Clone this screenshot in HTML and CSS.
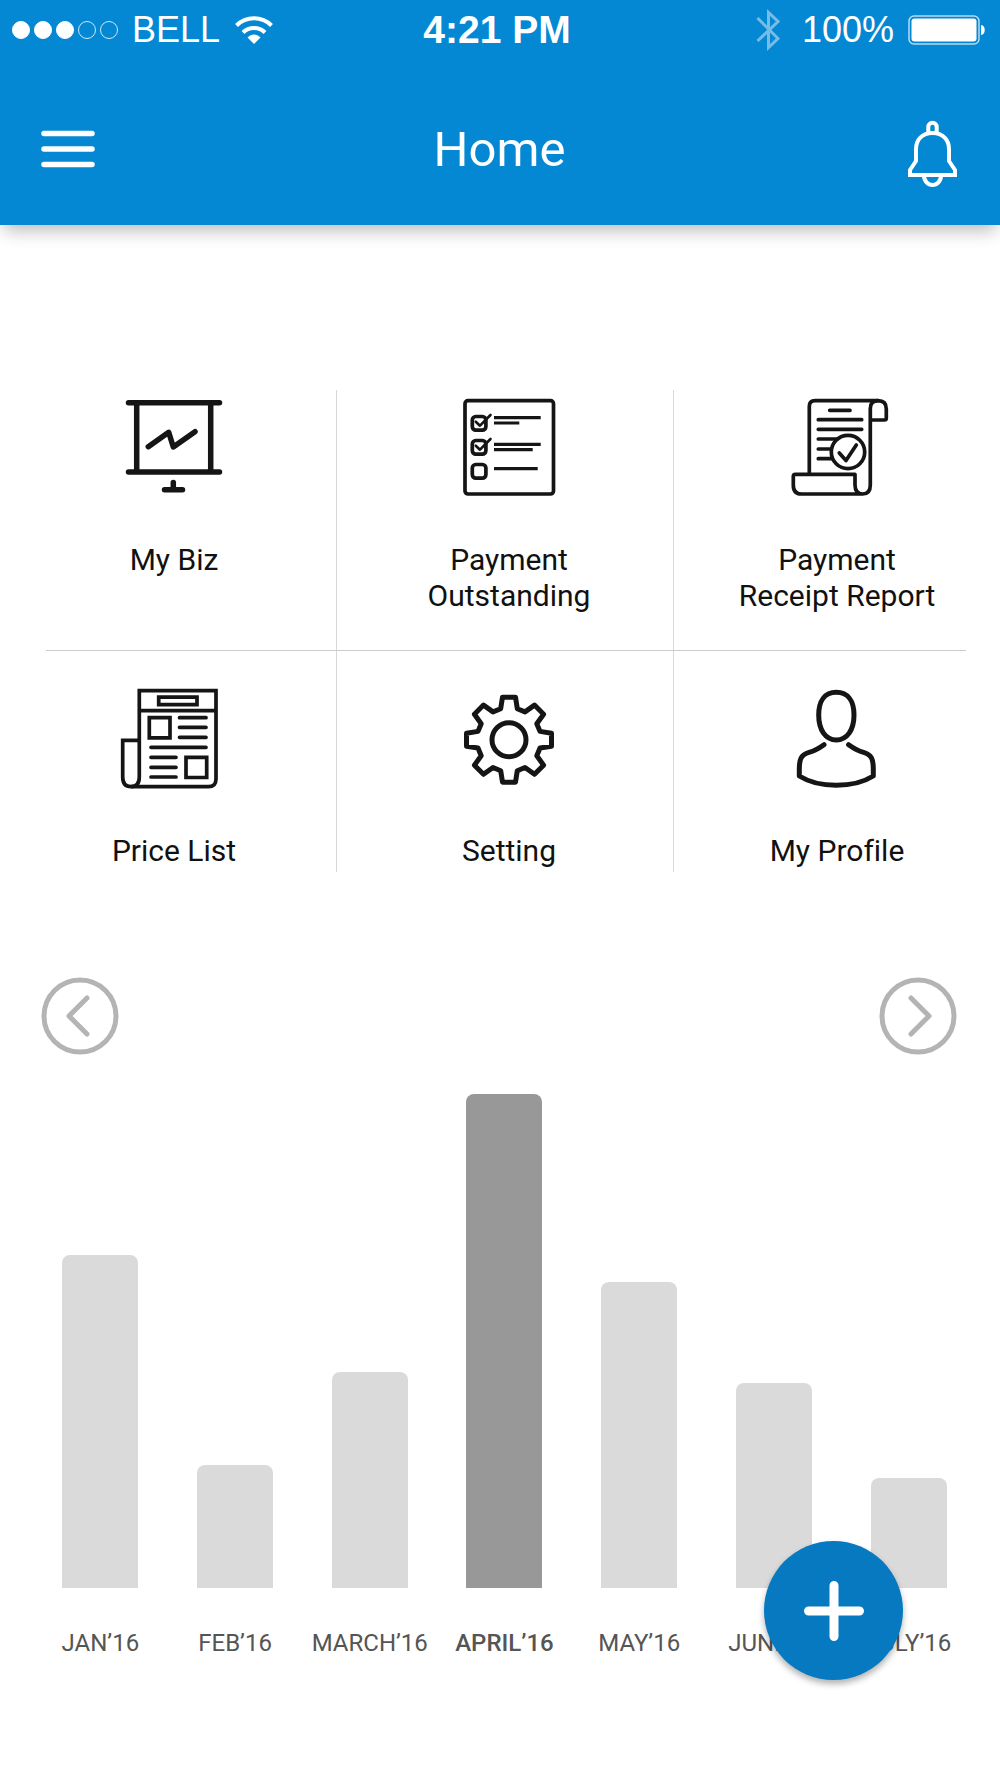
FILE: index.html
```html
<!DOCTYPE html>
<html lang="en">
<head>
	<meta charset="utf-8">
	<meta name="viewport" content="width=device-width, initial-scale=1">
	<title>Home</title>
	<link rel="stylesheet" href="styles.css">
</head>
<body>
	<header class="header">
		<div class="status_bar">
			<div class="status_left">
				<div class="signal">
					<span class="dot full"></span>
					<span class="dot full"></span>
					<span class="dot full"></span>
					<span class="dot"></span>
					<span class="dot"></span>
				</div>
				<span class="carrier">BELL</span>
				<svg class="wifi" width="38" height="28" viewBox="0 0 38 28" fill="none" stroke="#fff" stroke-width="4">
					<path d="M1.500 9.500C11-.2 27-.2 36.500 9.500"/>
					<path d="M8 16.500c6-6 16-6 22 0"/>
					<path d="M12.500 21.500c4-4 9-4 13 0L19 28z" fill="#fff" stroke="none"/>
				</svg>
			</div>
			<span class="time">4:21 PM</span>
			<div class="status_right">
				<svg class="bluetooth" width="24" height="42" viewBox="0 0 24 42" fill="none" stroke="#fff" stroke-width="3">
					<path d="M1.500 9L22 29.500 12.500 38.500V3.500L22 12.500 1.500 32"/>
				</svg>
				<span class="percent">100%</span>
				<svg class="battery" width="78" height="30" viewBox="0 0 78 30">
					<rect x="1" y="1" width="70" height="28" rx="5" fill="none" stroke="#fff" stroke-opacity=".7" stroke-width="1.500"/>
					<rect x="3.500" y="3.500" width="65" height="23" rx="3" fill="#fff"/>
					<path d="M73 10c5 0 5 10 0 10z" fill="#fff"/>
				</svg>
			</div>
		</div>
		<div class="app_bar">
			<button class="icon_btn" aria-label="Menu">
				<svg width="54" height="40" viewBox="0 0 54 40" stroke="#fff" stroke-width="5.500" stroke-linecap="round">
					<path d="M3 3.500h48M3 19h48M3 34.500h48"/>
				</svg>
			</button>
			<h1 class="title">Home</h1>
			<button class="icon_btn bell" aria-label="Notifications">
				<svg width="51" height="76" viewBox="0 0 51 76" fill="none" stroke="#fff" stroke-width="4">
					<path d="M21.300 20.500V15a4.200 4.200 0 0 1 8.400 0v5.500"/>
					<path d="M25.500 21C15 21 9 28 9 37v12L3 58v5h45v-5l-6-9V37c0-9-6-16-16.500-16z"/>
					<path d="M17 63.500c0 5.500 4 9.500 8.500 9.500s8.500-4 8.500-9.500"/>
				</svg>
			</button>
		</div>
	</header>

	<main>
		<nav class="tiles">
			<a class="tile" href="#biz">
				<svg class="tile_icon" viewBox="0 0 100 100" stroke-width="5.500">
					<path d="M4.500 4.700h91M4.500 74h91M12.700 4.700V74M86.700 4.700V74"/>
					<path d="M24.300 48.700l20.400-14.400 4.600 14.700L71 33.700"/>
					<path d="M49.300 84.500v7M40.500 91.700h18"/>
				</svg>
				<span>My Biz</span>
			</a>
			<a class="tile middle" href="#outstanding">
				<svg class="tile_icon" viewBox="0 0 100 100" stroke-width="3.700">
					<rect x="6" y="2.700" width="88.500" height="93.300" rx="3"/>
					<rect x="13.300" y="18.500" width="13.600" height="13.600" rx="3.500"/>
					<rect x="13.300" y="42.500" width="13.600" height="13.600" rx="3.500"/>
					<rect x="13.300" y="66.500" width="13.600" height="13.600" rx="3.500"/>
					<path stroke-width="2.600" d="M16.800 23.700l4.200 4L31.500 17M16.800 47.700l4.200 4L31.500 41"/>
					<path stroke-width="3.200" stroke-linecap="butt" d="M35 19.700h46.700M35 25h25.300M35 46.300h46.700M35 51.700h38.700M35 70.700h43.700"/>
				</svg>
				<span>Payment<br>Outstanding</span>
			</a>
			<a class="tile last" href="#receipts">
				<svg class="tile_icon" viewBox="0 0 100 100" stroke-width="3.700">
					<path d="M22.300 75.500V8.500q0-5.800 5.800-5.800H91q8.300 0 8.300 8.300v9q0 2-2 2H84"/>
					<path d="M91 2.700q-7.700 0-7.700 8V87q0 9-7.600 9T68 87V76.300H8.300q-2 0-2 2V87q0 9 8 9h61.400"/>
					<path d="M42.700 12.300H63M31.300 21.700h43.400M31.300 31.300h43.400M31.300 41H50M31.300 51H43M31.300 60.700H45"/>
					<circle cx="61" cy="54" r="16.700"/>
					<path d="M52.300 55l6.700 7.500L69.300 47"/>
				</svg>
				<span>Payment<br>Receipt Report</span>
			</a>

			<hr class="divider">

			<a class="tile" href="#prices">
				<svg class="tile_icon square" viewBox="0 0 100 100" stroke-width="3.700">
					<path d="M15.300 88V1.700H92V90q0 7.700-7.700 7.700H7M15.300 21.700H92"/>
					<path d="M15.300 51.300H-1.300V88q0 9.700 8.300 9.700T15.300 88"/>
					<path d="M34.700 8.200H73v7.500H34.700zM25.300 28.600H46v20.200H25.300zM62 68.300h20.700v20.200H62z"/>
					<path stroke-linecap="round" d="M55.500 28.700h26.500M55.500 38.300h26.500M55.500 48.300h26.500M27 58.300h55M27 68.300h25M27 78.300h25M27 88h25"/>
				</svg>
				<span>Price List</span>
			</a>
			<a class="tile middle" href="#setting">
				<svg class="tile_icon" viewBox="-50 -50.700 100 100" stroke-width="5">
					<circle r="17"/>
					<path d="M-8.300-31L-6.500-42.500H6.500L8.300-31 16-27.800 25.500-34.600 34.600-25.500 27.800-16 31-8.300 42.500-6.500V6.500L31 8.300 27.800 16 34.600 25.500 25.500 34.600 16 27.800 8.300 31 6.500 42.500H-6.500L-8.300 31-16 27.800-25.500 34.600-34.600 25.500-27.800 16-31 8.300-42.500 6.500V-6.500L-31-8.300-27.800-16-34.600-25.500-25.500-34.600-16-27.800z"/>
				</svg>
				<span>Setting</span>
			</a>
			<a class="tile last" href="#profile">
				<svg class="tile_icon" viewBox="0 0 100 100" stroke-width="5">
					<path d="M49.300 3.300C61 3.300 67 12 67 26c0 15-7 25-17.700 25S31.700 41 31.700 26c0-14 6-22.700 17.600-22.700z"/>
					<path d="M37 55.700c-6 4.300-10 6.300-15 7.600-8 2.200-9.700 7.200-9.700 16.700v7c10 6.300 23 9.300 37 9.300s27-3 37-9.300v-7c0-9.500-1.700-14.500-9.700-16.700-5-1.300-9-3.300-15-7.600"/>
				</svg>
				<span>My Profile</span>
			</a>
		</nav>

		<section class="chart">
			<div class="chart_nav">
				<button class="arrow" aria-label="Previous months">
					<svg width="78" height="78" viewBox="0 0 78 78">
						<circle cx="39" cy="39" r="36"/>
						<path d="M46 21L28 39l18 18"/>
					</svg>
				</button>
				<button class="arrow" aria-label="Next months">
					<svg width="78" height="78" viewBox="0 0 78 78">
						<circle cx="39" cy="39" r="36"/>
						<path d="M32 21l18 18-18 18"/>
					</svg>
				</button>
			</div>
			<div class="bars">
				<div class="month"><div class="bar" style="height: 333px"></div><span>JAN’16</span></div>
				<div class="month"><div class="bar" style="height: 123px"></div><span>FEB’16</span></div>
				<div class="month"><div class="bar" style="height: 216px"></div><span>MARCH’16</span></div>
				<div class="month active"><div class="bar" style="height: 494px"></div><span>APRIL’16</span></div>
				<div class="month"><div class="bar" style="height: 306px"></div><span>MAY’16</span></div>
				<div class="month"><div class="bar" style="height: 205px"></div><span>JUNE’16</span></div>
				<div class="month"><div class="bar" style="height: 110px"></div><span>JULY’16</span></div>
			</div>
		</section>
	</main>

	<button class="add_btn" aria-label="Add">
		<svg width="60" height="60" viewBox="0 0 60 60" stroke="#fff" stroke-width="9" stroke-linecap="round">
			<path d="M4.500 30h51M30 4.500v51"/>
		</svg>
	</button>
</body>
</html>
```

FILE: styles.css
```css
*{
	box-sizing: border-box;
}
body{
	margin: 0;
	background-color: #fff;
	color: #111;
	font-family: Roboto, "Liberation Sans", sans-serif;
}
button{
	padding: 0;
	border: none;
	background: none;
	cursor: pointer;
}
svg{
	display: block;
}

/* header */
.header{
	background-color: #0588d3;
	color: #fff;
	box-shadow: 0 10px 16px -4px rgba(0, 0, 0, 0.26);
}
.status_bar{
	display: grid;
	grid-template-columns: 1fr auto 1fr;
	align-items: center;
	height: 60px;
	padding: 0 14px 0 12px;
	font-family: "Liberation Sans", Arial, sans-serif;
	font-size: 36px;
}
.status_left, .status_right{
	display: flex;
	align-items: center;
}
.status_right{
	justify-content: flex-end;
}
.signal{
	display: flex;
	gap: 4px;
	margin-right: 14px;
}
.dot{
	width: 18px;
	height: 18px;
	border: 1px solid #cde7f6;
	border-radius: 50%;
}
.dot.full{
	background-color: #fff;
	border-color: #fff;
}
.carrier{
	margin-right: 15px;
}
.time{
	padding-right: 4px;
	font-size: 39px;
	font-weight: bold;
}
.bluetooth{
	margin-right: 22px;
	opacity: 0.45;
}
.percent{
	margin-right: 14px;
}
.app_bar{
	display: grid;
	grid-template-columns: 1fr auto 1fr;
	align-items: center;
	height: 165px;
	padding: 14px 42px 0 41px;
}
.title{
	margin: 0;
	font-size: 49px;
	font-weight: 400;
}
.icon_btn{
	justify-self: start;
}
.bell{
	justify-self: end;
}

/* menu tiles */
.tiles{
	display: grid;
	grid-template-columns: 325fr 337fr 326fr;
	margin-top: 165px;
	padding-left: 12px;
}
.tile{
	display: flex;
	flex-direction: column;
	align-items: center;
	gap: 44px;
	padding: 8px 0 36px;
	border-right: 1px solid #d8d8d8;
	color: #111;
	font-size: 30px;
	line-height: 36px;
	text-align: center;
	text-decoration: none;
	font-variant-ligatures: none;
}
.divider ~ .tile{
	padding-top: 38px;
	padding-bottom: 3px;
}
.tile.middle{
	padding-left: 8px;
}
.tile.last{
	border-right: none;
}
.tile_icon{
	width: 100px;
	height: 100px;
	overflow: visible;
	fill: none;
	stroke: #151515;
	stroke-linecap: round;
	stroke-linejoin: round;
}
.tile_icon.square{
	stroke-linecap: butt;
	stroke-linejoin: miter;
}
.divider{
	grid-column: 1 / -1;
	height: 1px;
	margin: 0 34px;
	border: none;
	background-color: #ccc;
}

/* chart */
.chart{
	margin-top: 105px;
	padding-bottom: 80px;
}
.chart_nav{
	display: flex;
	justify-content: space-between;
	padding: 0 43px 0 41px;
}
.arrow svg{
	fill: none;
	stroke: #b4b4b4;
	stroke-width: 5;
	stroke-linecap: round;
	stroke-linejoin: round;
}
.bars{
	display: grid;
	grid-template-columns: repeat(7, 1fr);
	align-items: end;
	margin-top: 39px;
	padding: 0 24px 0 33px;
}
.month{
	display: flex;
	flex-direction: column;
	align-items: center;
	gap: 41px;
	color: #555;
	font-size: 24px;
	line-height: 28px;
}
.bar{
	width: 76px;
	border-radius: 8px 8px 0 0;
	background-color: #dadada;
}
.active{
	font-weight: 500;
}
.active .bar{
	background-color: #989898;
}

/* floating button */
.add_btn{
	position: fixed;
	right: 97px;
	bottom: 98px;
	display: flex;
	align-items: center;
	justify-content: center;
	width: 139px;
	height: 139px;
	border-radius: 50%;
	background-color: #0779c0;
	box-shadow: 0 4px 6px rgba(0, 0, 0, 0.3);
}
```
